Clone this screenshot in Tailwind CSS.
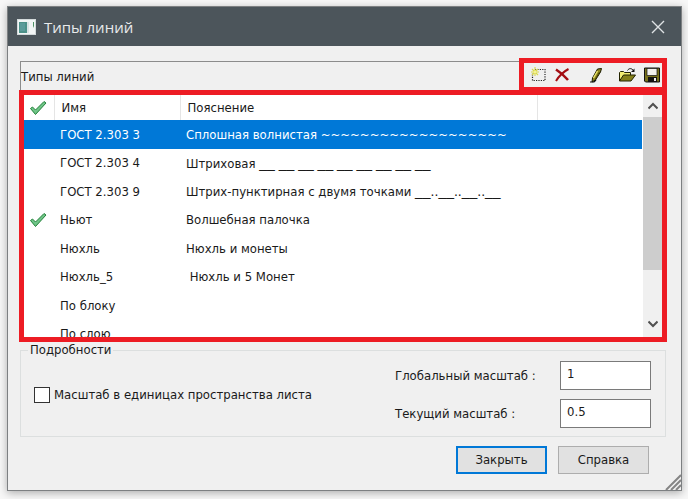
<!DOCTYPE html>
<html lang="ru">
<head>
    <meta charset="UTF-8">
    <meta name="viewport" content="width=device-width, initial-scale=1.0">
    <title>Типы линий</title>
    <script src="https://cdn.jsdelivr.net/npm/@tailwindcss/browser@4"></script>
</head>
<body class="flex min-h-screen bg-[#f7f7f7] pt-[6px] pr-[6px] pb-2 pl-[7px] font-['DejaVu_Sans_Condensed','Noto_Sans',sans-serif] text-[13px] leading-4 text-[#1a1a1a]">

    <div class="relative flex flex-1 flex-col border border-[#7d8082] bg-[#f0f0f0] shadow-[0_2px_8px_rgba(0,0,0,0.3)]">

        <!-- Title bar -->
        <header class="flex h-[39px] items-center bg-[#4c555b] pr-4 pl-[9px] text-[#e8eaeb]">
            <svg class="h-4 w-5" viewBox="0 0 20 16">
                <rect x="0.5" y="0.5" width="18" height="15" fill="#f2f5f5" stroke="#d3dadb"/>
                <rect x="2" y="3" width="8" height="11" fill="#4d9189"/>
                <rect x="3" y="4" width="5" height="8" fill="#5c9b9a"/>
                <rect x="10" y="3" width="2" height="11" fill="#d9e3e4"/>
                <path d="M17 3v6l-1-2V3z" fill="#4d9165"/>
            </svg>
            <h1 class="ml-[7px] font-['Open_Sans','Noto_Sans',sans-serif] text-[15px]">Типы линий</h1>
            <button aria-label="Закрыть окно" class="ml-auto">
                <svg class="h-[14px] w-[14px]" viewBox="0 0 14 14" fill="none" stroke="#dfe3e5" stroke-width="1.4"><path d="M1 1l12 12M13 1L1 13"/></svg>
            </button>
        </header>

        <main class="flex flex-1 flex-col pt-3 pr-[14px] pb-4 pl-[11px]">

            <!-- Caption and toolbar -->
            <div class="flex h-8 items-end">
                <div class="ml-px flex h-[29px] flex-1 items-center border-t border-l border-[#8c8c8c] pt-px">Типы линий</div>
                <div class="flex h-8 w-[148px] items-center border-5 border-b-3 border-[#ed1c24] pl-[6px]">
                    <button aria-label="Создать">
                        <svg class="h-4 w-4" viewBox="0 0 16 16">
                            <path d="M5 2.500h10v11H2.500V6" fill="none" stroke="#222" stroke-width="1.200" stroke-dasharray="1.200 1.200"/>
                            <path d="M5 0v9M1 5h8M2 2l6 6M8 2L2 8" stroke="#d9d94a" stroke-width="1.100"/>
                            <path d="M5 3.500v3M3.500 5h3" stroke="#fffbb0" stroke-width="1"/>
                        </svg>
                    </button>
                    <button aria-label="Удалить" class="ml-2">
                        <svg class="h-4 w-4" viewBox="0 0 16 16" fill="none" stroke="#a30d12">
                            <path d="M2 2.500c4 2.500 8 6 12 10.500" stroke-width="2.600"/>
                            <path d="M14.500 2C9 5 5 9 2 14" stroke-width="2"/>
                        </svg>
                    </button>
                    <button aria-label="Изменить" class="ml-[18px]">
                        <svg class="h-4 w-4" viewBox="0 0 16 16">
                            <path d="M9.500 2l4-.500-1 3.500-5 8-3.500 2 .500-4z" fill="#8b8520" stroke="#191900" stroke-width="1"/>
                            <path d="M9.500 4l-4 7" stroke="#eae36a" stroke-width="1.500"/>
                            <path d="M11.500 5l-4.500 8" stroke="#4b4700" stroke-width="1"/>
                            <path d="M2 15h4l2-2" fill="none" stroke="#111" stroke-width="1.200"/>
                        </svg>
                    </button>
                    <button aria-label="Открыть" class="ml-[14px]">
                        <svg class="h-4 w-[18px]" viewBox="0 0 18 16">
                            <path d="M1.500 14V5.500l1-1h3l1 1h6V8" fill="#f3ee73" stroke="#222200"/>
                            <path d="M1.500 14l4-6h12l-4.500 6z" fill="#85801a" stroke="#222200"/>
                            <path d="M9.500 3.500c1.500-2.500 4-2.500 6 0" fill="none" stroke="#111"/>
                            <path d="M16.500 1.500v3.500H13z" fill="#111"/>
                        </svg>
                    </button>
                    <button aria-label="Сохранить" class="ml-2">
                        <svg class="h-4 w-4" viewBox="0 0 16 16">
                            <path d="M.5 1h15v14h-14l-1-1z" fill="#77711b" stroke="#111"/>
                            <rect x="3" y="1.500" width="10" height="7" fill="#f2f2ef" stroke="#111" stroke-width=".700"/>
                            <rect x="4" y="10" width="9" height="5" fill="#111"/>
                            <rect x="10" y="11" width="2" height="3" fill="#eee"/>
                        </svg>
                    </button>
                </div>
            </div>

            <!-- Line type list -->
            <div class="flex h-[252px] border-5 border-[#ed1c24] bg-white">
                <div class="mr-px flex-1 overflow-hidden">
                    <table class="w-full table-fixed text-left">
                        <colgroup>
                            <col class="w-[30px]">
                            <col class="w-[126px]">
                            <col>
                            <col class="w-[105px]">
                        </colgroup>
                        <thead>
                            <tr class="h-[25px]">
                                <th class="border-r border-[#e5e5e5] p-0 pl-[5px]" aria-label="Используется">
                                    <svg class="h-4 w-[18px]" viewBox="0 0 18 16"><path d="M1.500 8.500L3.500 7l3 3 8.500-8.500 2 1.500L6.500 14.500z" fill="#6fc487" stroke="#23823b" stroke-linejoin="round"/></svg>
                                </th>
                                <th class="border-r border-[#e5e5e5] p-0 pl-[7px] font-normal">Имя</th>
                                <th class="border-r border-[#e5e5e5] p-0 pl-[7px] font-normal">Пояснение</th>
                                <td class="p-0"></td>
                            </tr>
                        </thead>
                        <tbody>
                            <tr class="h-[29px] bg-[#0078d7] text-white">
                                <td class="p-0"></td>
                                <td class="p-0 pl-[6px]">ГОСТ 2.303 3</td>
                                <td class="p-0 pl-[6px]">Сплошная волнистая ~~~~~~~~~~~~~~~~~~~</td>
                                <td class="p-0"></td>
                            </tr>
                            <tr class="h-7">
                                <td class="p-0"></td>
                                <td class="p-0 pl-[6px]">ГОСТ 2.303 4</td>
                                <td class="p-0 pl-[6px]">Штриховая <span class="font-['Liberation_Sans',sans-serif] text-sm leading-4">__ __ __ __ __ __ __ __ __</span></td>
                                <td class="p-0"></td>
                            </tr>
                            <tr class="h-[29px]">
                                <td class="p-0"></td>
                                <td class="p-0 pl-[6px]">ГОСТ 2.303 9</td>
                                <td class="p-0 pl-[6px]">Штрих-пунктирная с двумя точками <span class="font-['Liberation_Sans',sans-serif] text-sm leading-4">__..__..__..__</span></td>
                                <td class="p-0"></td>
                            </tr>
                            <tr class="h-7">
                                <td class="p-0 pl-[5px]">
                                    <svg class="h-4 w-[18px]" viewBox="0 0 18 16"><path d="M1.500 8.500L3.500 7l3 3 8.500-8.500 2 1.500L6.500 14.500z" fill="#6fc487" stroke="#23823b" stroke-linejoin="round"/></svg>
                                </td>
                                <td class="p-0 pl-[6px]">Ньют</td>
                                <td class="p-0 pl-[6px]">Волшебная палочка</td>
                                <td class="p-0"></td>
                            </tr>
                            <tr class="h-[29px]">
                                <td class="p-0"></td>
                                <td class="p-0 pl-[6px]">Нюхль</td>
                                <td class="p-0 pl-[6px]">Нюхль и монеты</td>
                                <td class="p-0"></td>
                            </tr>
                            <tr class="h-7">
                                <td class="p-0"></td>
                                <td class="p-0 pl-[6px]">Нюхль_5</td>
                                <td class="p-0 pl-[6px]">&nbsp;Нюхль и 5 Монет</td>
                                <td class="p-0"></td>
                            </tr>
                            <tr class="h-[29px]">
                                <td class="p-0"></td>
                                <td class="p-0 pl-[6px]">По блоку</td>
                                <td class="p-0"></td>
                                <td class="p-0"></td>
                            </tr>
                            <tr class="h-7">
                                <td class="p-0"></td>
                                <td class="p-0 pl-[6px]">По слою</td>
                                <td class="p-0"></td>
                                <td class="p-0"></td>
                            </tr>
                        </tbody>
                    </table>
                </div>

                <!-- Scroll bar -->
                <div class="flex w-[19px] flex-col bg-[#f0f0f0]">
                    <button aria-label="Вверх" class="flex h-[22px] items-center justify-center">
                        <svg class="h-2 w-[10px]" viewBox="0 0 10 8" fill="none" stroke="#505050" stroke-width="2"><path d="M.5 6.500L5 2l4.500 4.500"/></svg>
                    </button>
                    <div class="h-[153px] bg-[#cdcdcd]"></div>
                    <button aria-label="Вниз" class="mt-auto flex h-[26px] items-center justify-center">
                        <svg class="h-2 w-[10px]" viewBox="0 0 10 8" fill="none" stroke="#505050" stroke-width="2"><path d="M.5 1.500L5 6l4.500-4.500"/></svg>
                    </button>
                </div>
            </div>

            <!-- Details -->
            <fieldset class="mr-px ml-px flex items-center justify-between border border-[#dcdfdf] pr-[14px] pb-2 pl-[13px]">
                <legend class="-ml-[6px] px-[2px]">Подробности</legend>
                <label class="flex items-center gap-1 pt-1">
                    <input type="checkbox" class="h-4 w-4 appearance-none border border-[#333] bg-white">
                    Масштаб в единицах пространства листа
                </label>
                <div class="grid grid-cols-[165px_91px] items-center gap-y-[9px] pt-[3px]">
                    <label for="globalScale">Глобальный масштаб :</label>
                    <input id="globalScale" type="text" value="1" class="h-[29px] border border-[#7a7a7a] bg-white px-[6px] pb-1 outline-none">
                    <label for="currentScale">Текущий масштаб :</label>
                    <input id="currentScale" type="text" value="0.5" class="h-[29px] border border-[#7a7a7a] bg-white px-[6px] pb-1 outline-none">
                </div>
            </fieldset>

            <div class="mt-[9px] flex justify-end gap-[11px] pr-[18px]">
                <button class="h-7 w-[91px] border-2 border-[#0078d7] bg-[#e1e1e1]">Закрыть</button>
                <button class="h-7 w-[91px] border border-[#adadad] bg-[#e1e1e1]">Справка</button>
            </div>
        </main>

        <!-- Resize grip -->
        <svg class="absolute right-0 bottom-0 h-4 w-4" viewBox="0 0 16 16" stroke="#858585" stroke-width="2"><path d="M1 16L16 1M6 16L16 6M11 16l5-5"/></svg>
    </div>

</body>
</html>
